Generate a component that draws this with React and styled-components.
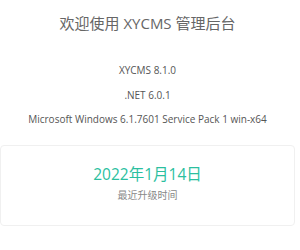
import React from 'react';
import styled, { createGlobalStyle } from 'styled-components';

const GlobalStyle = createGlobalStyle`
  body {
    margin: 0;
    background: #fff;
    font-family: "Open Sans", "Noto Sans CJK SC", sans-serif;
  }
`;

const Page = styled.div`
  width: 295px;
  display: flex;
  flex-direction: column;
  align-items: center;
`;

const Title = styled.h1`
  margin: 12px 0 0;
  font-size: 15px;
  font-weight: 400;
  line-height: 22px;
  color: #666;
`;

const InfoList = styled.div`
  margin-top: 28px;
  display: flex;
  flex-direction: column;
  align-items: center;
  gap: 8.5px;
`;

const InfoLine = styled.p`
  margin: 0;
  font-size: 10px;
  line-height: 16px;
  color: #555;
`;

const Card = styled.section`
  box-sizing: border-box;
  width: 295px;
  height: 81px;
  margin-top: 18px;
  padding-top: 17px;
  border: 1px solid #f0f0f0;
  border-radius: 4px;
  display: flex;
  flex-direction: column;
  align-items: center;
  gap: 3px;
`;

const BigValue = styled.div`
  font-size: 15.5px;
  line-height: 22px;
  color: #2bbf9f;
`;

const Caption = styled.div`
  font-size: 10px;
  line-height: 14px;
  color: #888;
`;

const info = [
  'XYCMS 8.1.0',
  '.NET 6.0.1',
  'Microsoft Windows 6.1.7601 Service Pack 1 win-x64',
];

export default function App() {
  return (
    <>
      <GlobalStyle />
      <Page>
        <Title>欢迎使用 XYCMS 管理后台</Title>
        <InfoList>
          {info.map((t) => (
            <InfoLine key={t}>{t}</InfoLine>
          ))}
        </InfoList>
        <Card>
          <BigValue>2022年1月14日</BigValue>
          <Caption>最近升级时间</Caption>
        </Card>
      </Page>
    </>
  );
}
